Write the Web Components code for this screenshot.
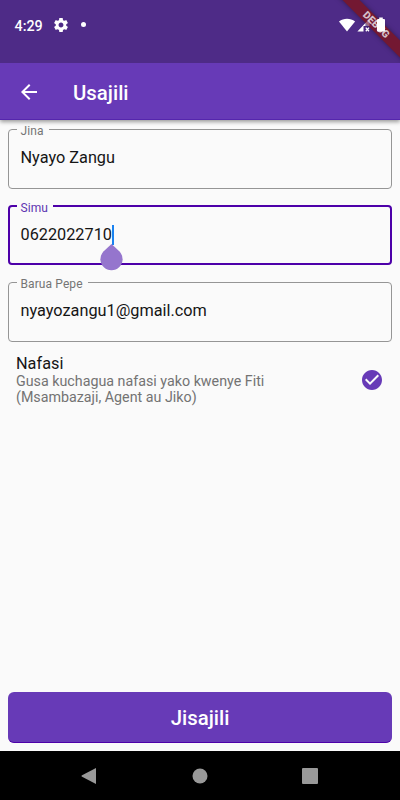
<!DOCTYPE html>
<html lang="sw">
<head>
<meta charset="utf-8">
<title>Usajili</title>
<style>
html, body { margin: 0; height: 100%; }
body { font-family: Roboto, "Noto Sans", sans-serif; background: #fafafa; overflow: hidden; }
</style>
</head>
<body>
<app-screen>
  <status-bar slot="status" time="4:29"></status-bar>
  <app-bar slot="bar">Usajili</app-bar>
  <text-field label="Jina">Nyayo Zangu</text-field>
  <text-field label="Simu" focused>0622022710</text-field>
  <text-field label="Barua Pepe">nyayozangu1@gmail.com</text-field>
  <check-tile><span slot="title">Nafasi</span><span>Gusa kuchagua nafasi yako kwenye Fiti<br>(Msambazaji, Agent au Jiko)</span></check-tile>
  <submit-button slot="action">Jisajili</submit-button>
  <nav-bar slot="nav"></nav-bar>
</app-screen>
<script>
const define = (name, html, setup) => customElements.define(name, class extends HTMLElement {
  connectedCallback() {
    if (this.shadowRoot) return;
    const t = document.createElement('template');
    t.innerHTML = html;
    this.attachShadow({ mode: 'open' }).append(t.content.cloneNode(true));
    if (setup) setup(this, this.shadowRoot);
  }
});

define('app-screen', `
<style>
:host { display: flex; flex-direction: column; width: 400px; height: 800px; background: #fafafa; overflow: hidden; }
main { flex: 1; display: flex; flex-direction: column; padding: 8px 8px 0; }
footer { padding: 0 8px 8px; }
</style>
<slot name="status"></slot><slot name="bar"></slot>
<main><slot></slot></main>
<footer><slot name="action"></slot></footer>
<slot name="nav"></slot>`);

define('status-bar', `
<style>
:host { display: flex; position: relative; height: 63px; box-sizing: border-box; background: #4e2b87; color: #fff; overflow: hidden; padding: 15px 12px 0 14.500px; }
.time { font-size: 14.300px; font-weight: 500; line-height: 22px; width: 39.500px; }
.gear { width: 14px; height: 14px; margin-top: 3px; }
.dot { width: 5px; height: 5px; border-radius: 50%; background: #fff; margin: 7px 0 0 13px; }
.icons { margin-left: auto; width: 48px; height: 16px; margin-top: 2px; position: relative; z-index: 2; }
</style>
<span class="time"></span>
<svg class="gear" viewBox="2 2 20 20"><path fill="#fff" d="M19.43 12.98c.04-.32.07-.64.07-.98s-.03-.66-.07-.98l2.11-1.65c.19-.15.24-.42.12-.64l-2-3.46c-.12-.22-.39-.3-.61-.22l-2.49 1c-.52-.4-1.08-.73-1.69-.98l-.38-2.65C14.46 2.18 14.25 2 14 2h-4c-.25 0-.46.18-.49.42l-.38 2.65c-.61.25-1.17.59-1.69.98l-2.49-1c-.23-.09-.49 0-.61.22l-2 3.46c-.13.22-.07.49.12.64l2.11 1.65c-.04.32-.07.65-.07.98s.03.66.07.98l-2.11 1.65c-.19.15-.24.42-.12.64l2 3.46c.12.22.39.3.61.22l2.49-1c.52.4 1.08.73 1.69.98l.38 2.65c.03.24.24.42.49.42h4c.25 0 .46-.18.49-.42l.38-2.65c.61-.25 1.17-.59 1.69-.98l2.49 1c.23.09.49 0 .61-.22l2-3.46c.12-.22.07-.49-.12-.64l-2.11-1.65zM12 15.5c-1.930 0-3.5-1.570-3.5-3.500s1.570-3.500 3.500-3.500 3.500 1.570 3.500 3.500-1.570 3.500-3.500 3.500z"/></svg>
<span class="dot"></span>
<debug-banner></debug-banner>
<svg class="icons" viewBox="340 17 48 16" fill="#fff" overflow="visible">
  <path d="M339 21.400C343.500 17.700 350.500 17.700 355.100 21.400L347 31.600Z"/>
  <path d="M365.500 22.900V26H363.500V31.500H357.400L364.500 23.900Z"/>
  <path fill-opacity=".35" d="M369.500 18.800V26H365.500V22.900Z"/>
  <path d="M365.800 27.600L369 31.200M369 27.600L365.800 31.200" stroke="#fff" stroke-width="1.300"/>
  <path d="M379.200 17.600h3.600v1.300h1.200q1 0 1 1v10.600q0 1-1 1h-6q-1 0-1-1v-10.600q0-1 1-1h1.200z"/>
</svg>`, (el, root) => root.querySelector('.time').textContent = el.getAttribute('time'));

define('debug-banner', `
<style>
:host { position: absolute; z-index: 1; top: 0; right: 0; width: 80px; height: 63px; overflow: hidden; pointer-events: none; }
div { position: absolute; left: -4px; top: 18.500px; width: 120px; height: 12px; transform: rotate(45deg); background: #731832; box-shadow: 0 0 5px rgba(0,0,0,.4); color: #d5c0cb; text-align: center; font-size: 10.200px; font-weight: 900; line-height: 12px; }
</style><div>DEBUG</div>`);

define('app-bar', `
<style>
:host { display: flex; align-items: center; height: 57px; box-sizing: border-box; padding: 0 0 0 16.500px; background: #673ab7; color: #fff; box-shadow: 0 2px 4px rgba(0,0,0,.38); border-bottom: 1px solid #5526ad; }
svg { width: 24px; height: 24px; margin: 1px 32.500px 0 0; }
h1 { margin: 3px 0 0; font-size: 20.400px; font-weight: 500; line-height: 24px; }
</style>
<svg viewBox="0 0 24 24"><path fill="#fff" d="M20 11H7.830l5.590-5.590L12 4l-8 8 8 8 1.410-1.410L7.830 13H20v-2z"/></svg>
<h1><slot></slot></h1>`);

define('text-field', `
<style>
:host { display: block; height: 60px; margin-bottom: 16.500px; --line: #959595; --w: 1px; --label: #757575; }
:host([focused]) { --line: #4d00a9; --w: 2px; --label: #5e35b1; }
fieldset { height: 66.500px; margin: -6px 0 0; padding: 0 0 0 calc(8.500px - var(--w)); box-sizing: border-box; border: var(--w) solid var(--line); border-radius: 4px; min-width: 0; }
legend { height: 14px; padding: 0 5px 0 4px; color: var(--label); font-size: 12px; line-height: 14px; letter-spacing: .1px; }
legend span { display: block; transform: translateY(1.500px); }
.value { display: flex; padding: 12px 0 0 4px; font-size: 16.280px; line-height: 20px; color: #151515; }
.caret { display: none; position: relative; width: 2px; height: 20px; background: #1a82f0; }
:host([focused]) .caret { display: block; }
.caret svg { position: absolute; left: -12px; top: 18px; width: 24px; height: 28px; }
</style>
<fieldset><legend><span></span></legend>
<div class="value"><slot></slot><i class="caret"><svg viewBox="0 0 24 28"><path fill="#9575cd" d="M11.500 1L19.300 8.300A11.100 11.100 0 1 1 3.700 8.300Z"/></svg></i></div></fieldset>`,
(el, root) => root.querySelector('legend span').textContent = el.getAttribute('label'));

define('check-tile', `
<style>
:host { display: flex; align-items: center; justify-content: space-between; height: 52px; padding: 0 8.500px 0 8px; margin-top: -4px; }
.title { font-size: 16.300px; line-height: 19px; color: #151515; }
.sub { font-size: 14.280px; line-height: 16.500px; color: #737373; }
svg { width: 24px; height: 24px; }
</style>
<div><div class="title"><slot name="title"></slot></div><div class="sub"><slot></slot></div></div>
<svg viewBox="0 0 24 24"><path fill="#673ab7" d="M12 2C6.480 2 2 6.480 2 12s4.480 10 10 10 10-4.480 10-10S17.520 2 12 2zm-2 15l-5-5 1.410-1.410L10 14.170l7.590-7.590L19 8l-9 9z"/></svg>`);

define('submit-button', `
<style>
:host { display: flex; justify-content: center; align-items: center; height: 51px; box-sizing: border-box; border-radius: 6px; background: #673ab7; border-bottom: 1px solid #4d00a9; color: #fff; font-size: 20.400px; font-weight: 500; padding-top: 2px; }
</style><slot></slot>`);

define('nav-bar', `
<style>
:host { display: flex; justify-content: center; gap: 94px; align-items: center; height: 49px; background: #000; }
svg { width: 16px; height: 18px; }
</style>
<svg viewBox="0 0 16 18" overflow="visible"><path fill="#999" d="M14 1v16L-.400 9.400V8.600Z"/></svg>
<svg viewBox="0 0 16 18"><circle cx="8" cy="9" r="7.500" fill="#999"/></svg>
<svg viewBox="0 0 16 18"><rect y="1" width="16" height="16" rx="1" fill="#999"/></svg>`);
</script>
</body>
</html>
